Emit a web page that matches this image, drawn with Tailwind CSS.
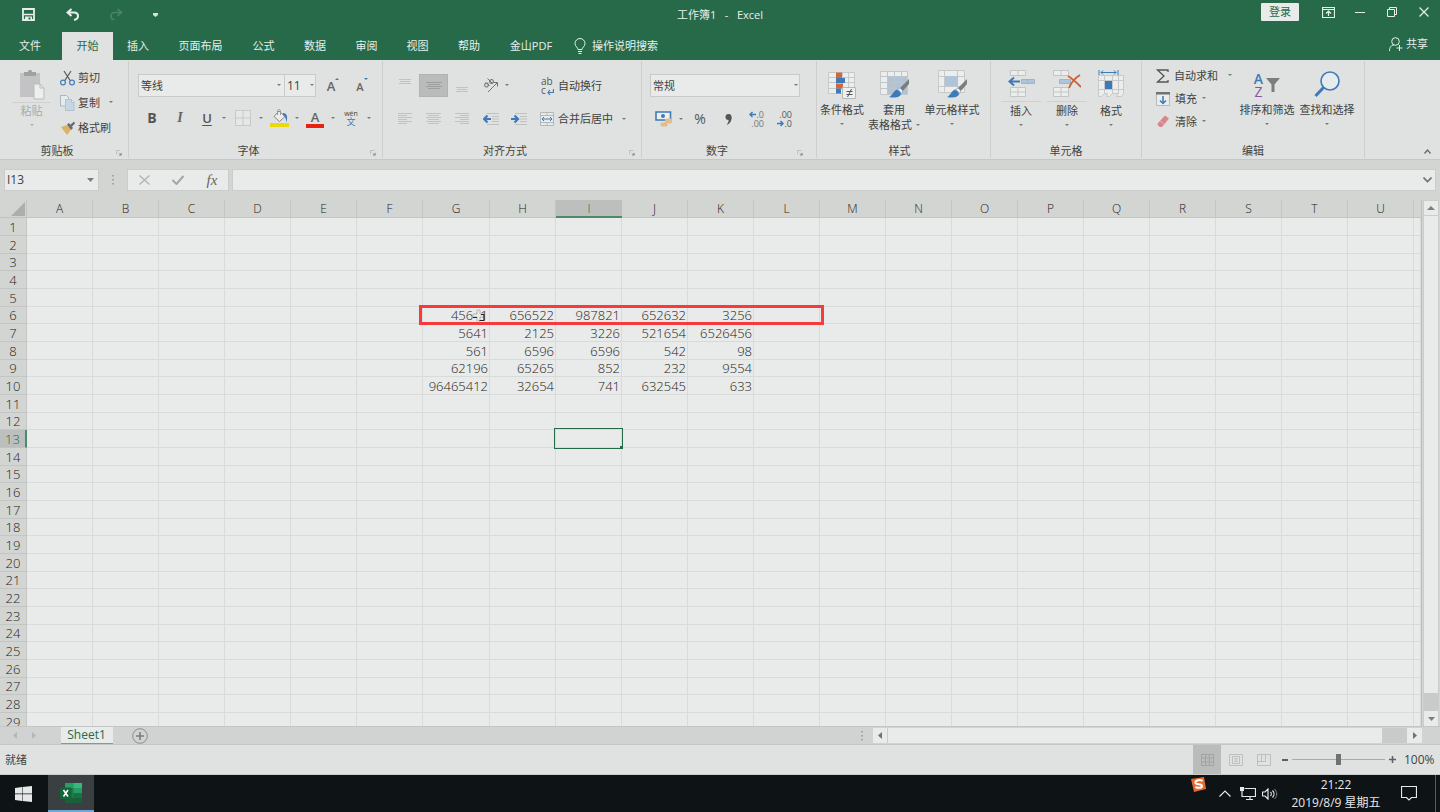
<!DOCTYPE html>
<html lang="zh-CN">
<head>
<meta charset="utf-8">
<title>工作簿1 - Excel</title>
<script src="https://cdn.jsdelivr.net/npm/@tailwindcss/browser@4"></script>
</head>
<body class="flex h-screen flex-col overflow-hidden bg-[#d3d5d3] font-['Open_Sans','Noto_Sans_CJK_SC',sans-serif] text-[11px] leading-4 text-[#3f4241]">
<svg class="hidden" aria-hidden="true">
  <symbol id="caret" viewBox="0 0 4 3"><path d="M0 0h4L2 2z" fill="#777a78"/></symbol>
  <symbol id="launch" viewBox="0 0 7 7"><path d="M.5 5V.5H5M3 3l2.500 2.500" fill="none" stroke="#b4b7b5"/><path d="M6.500 3v3.500H3z" fill="#808381"/></symbol>
  <symbol id="brush" viewBox="0 0 22 21"><path d="M21 1v5l-7 8-3-3z" fill="#7b7e7c"/><path d="M8 12c3-2 6 1 5 4-1 4-8 4-12 3 3-1 4-5 7-7z" fill="#3f7ab8"/><path d="M9 12l3-2 3 3-2 3c0-2-2-4-4-4z" fill="#eef2f2" stroke="#7e9fc0" stroke-width=".6"/></symbol>
</svg>

<header class="bg-[#266a4a] text-[#e8efea]">
  <div class="grid h-8 grid-cols-3">
    <div class="flex items-center pb-[3px] pl-[14px]">
      <button aria-label="保存" class="flex w-7 justify-center"><svg class="h-[13px] w-[13px]" viewBox="0 0 13 13"><path d="M1 1h11v11H1z" fill="none" stroke="#e8efea" stroke-width="1.800"/><path d="M2 6.500h9" stroke="#e8efea" stroke-width="1.500"/><path d="M3 8.500h7v4H3z" fill="#e8efea"/><path d="M6.500 9.500h2v2h-2z" fill="#266a4a"/></svg></button>
      <button aria-label="撤消" class="ml-4 flex w-7 justify-center"><svg class="h-[13px] w-[13px]" viewBox="0 0 13 13"><path d="M5.500 1L1.500 4.500l4 3.500M1.500 4.500H8c2.500 0 4 1.500 4 3.500s-1.500 3.500-4 4" fill="none" stroke="#e8efea" stroke-width="2"/></svg></button>
      <button aria-label="恢复" class="ml-4 flex w-7 justify-center"><svg class="h-[13px] w-[13px]" viewBox="0 0 13 13"><path d="M7.500 1l4 3.500-4 3.500M11.500 4.500H5C2.500 4.500 1 6 1 8s1.500 3.500 3.500 3.500" fill="none" stroke="#4b8568" stroke-width="1.600"/></svg></button>
      <button aria-label="自定义快速访问工具栏" class="ml-[11px] flex w-7 justify-center"><svg class="h-[4px] w-[5px]" viewBox="0 0 5 4"><path d="M0 0h5v2L2.500 4 0 2z" fill="#d5e2da"/></svg></button>
    </div>
    <h1 class="flex items-center justify-center pb-[3px] text-[11px] whitespace-pre">工作簿1   -   Excel</h1>
    <div class="flex items-start justify-end">
      <button class="mt-[3px] mr-[13px] h-[18px] w-[38px] rounded-[1px] bg-[#e8ebe9] text-[#266a4a]">登录</button>
      <button aria-label="功能区显示选项" class="flex h-6 w-8 items-center justify-center"><svg class="h-[11px] w-[13px]" viewBox="0 0 13 11"><path d="M.5.5h12v10H.5zM.5 2.500h12M6.500 9V4.500M4 6.500l2.500-2.500L9 6.500" fill="none" stroke="#e8efea" stroke-width="1.200"/></svg></button>
      <button aria-label="最小化" class="flex h-6 w-8 items-center justify-center"><svg class="h-[10px] w-[10px]" viewBox="0 0 10 10"><path d="M0 5.500h10" stroke="#e8efea"/></svg></button>
      <button aria-label="向下还原" class="flex h-6 w-8 items-center justify-center"><svg class="h-[10px] w-[10px]" viewBox="0 0 10 10"><path d="M.5 2.500h7v7h-7zM2.500 2.500v-2h7v7h-2" fill="none" stroke="#e8efea"/></svg></button>
      <button aria-label="关闭" class="flex h-6 w-8 items-center justify-center"><svg class="h-[10px] w-[10px]" viewBox="0 0 10 10"><path d="M.5.5l9 9M9.500.5l-9 9" stroke="#e8efea" stroke-width="1.200"/></svg></button>
    </div>
  </div>
  <nav class="flex h-7">
    <button class="mr-[6px] w-[51px] pl-[9px]">文件</button>
    <button class="ml-[5px] w-[51px] bg-[#dfe2e0] text-[#266a4a]">开始</button>
    <button class="w-[50px]">插入</button>
    <button class="w-[75px]">页面布局</button>
    <button class="w-[51px]">公式</button>
    <button class="w-[52px]">数据</button>
    <button class="w-[51px]">审阅</button>
    <button class="w-[51px]">视图</button>
    <button class="w-[52px]">帮助</button>
    <button class="w-[72px]">金山PDF</button>
    <button class="flex items-center gap-[6px] pl-[7px]"><svg class="h-4 w-3" viewBox="0 0 12 16"><path d="M4 11.500c0-2-3-3-3-6a5 5 0 0 1 10 0c0 3-3 4-3 6zM4 13.500h4M4.500 15.500h3" fill="none" stroke="#e8efea"/></svg>操作说明搜索</button>
    <button class="mr-3 ml-auto flex items-center gap-[3px] pb-1"><svg class="h-[14px] w-[14px]" viewBox="0 0 14 14"><circle cx="6.500" cy="4.500" r="3.800" fill="none" stroke="#e8efea"/><path d="M.5 14c0-4 2-6 4.500-6M10.500 8v6M7.500 11h6" fill="none" stroke="#e8efea"/></svg>共享</button>
  </nav>
</header>

<section aria-label="功能区" class="flex h-[100px] border-b border-[#c6c8c6] bg-[#dfe2e0] py-[1px]">
  <!-- 剪贴板 -->
  <div class="flex w-[129px] flex-col border-r border-[#cccfcd]">
    <div class="flex flex-1">
      <button class="ml-[12px] flex w-[39px] flex-col items-center pt-[9px] text-[#a9abaa]">
        <svg class="h-[30px] w-[27px]" viewBox="0 0 27 30"><path d="M2 3h20v24H2z" fill="#c3c3c6"/><path d="M6 2h4c0-3 4-3 4 0h4v4H6z" fill="#9fa1a2"/><path d="M16 14h6l4 4v11H16z" fill="#eceeef" stroke="#b9bbbb"/><path d="M22 14v4h4" fill="none" stroke="#b9bbbb"/></svg>
        <span class="mt-[2px] w-full border-t border-[#cfd1cf]">粘贴</span>
        <svg class="mt-[5px] h-[3px] w-1 opacity-50"><use href="#caret"/></svg>
      </button>
      <div class="flex flex-col pt-[4px] pl-[9px]">
        <button class="flex h-[25px] items-center gap-[3px]"><svg class="h-4 w-[15px]" viewBox="0 0 15 16"><path d="M4 1l6.500 10M11 1L4.500 11" stroke="#5d605f" stroke-width="1.300"/><circle cx="3" cy="12.500" r="2.400" fill="none" stroke="#4a7fba" stroke-width="1.200"/><circle cx="12" cy="12.500" r="2.400" fill="none" stroke="#4a7fba" stroke-width="1.200"/></svg>剪切</button>
        <button class="flex h-[25px] items-center gap-[3px]"><svg class="h-4 w-[15px]" viewBox="0 0 15 16"><path d="M.5.5h6l2 2V11h-8z" fill="#e6ebee" stroke="#abb6bf"/><path d="M5.500 4.500h6l2.500 2.500v8.500H5.500z" fill="#c5d7e6" stroke="#b4c0ca"/><path d="M11.500 4.500v3H14" fill="#eef1f2" stroke="#b4c0ca"/></svg>复制<svg class="ml-[6px] h-[3px] w-1"><use href="#caret"/></svg></button>
        <button class="flex h-[25px] items-center gap-[3px]"><svg class="h-[14px] w-[15px]" viewBox="0 0 15 14"><path d="M1 6l6-2 4 5-4 5z" fill="#dcb267"/><path d="M7 3.500l2-1.500 4 5-2 2z" fill="#6a6c6c"/><path d="M10 4l4-3.500 1 2-3.500 3.500z" fill="#6a6c6c"/></svg>格式刷</button>
      </div>
    </div>
    <div class="flex h-[15px]"><span class="flex-1 text-center">剪贴板</span><button aria-label="剪贴板设置" class="flex w-[14px] items-center pt-1"><svg class="ml-[2px] h-[6px] w-[6px]"><use href="#launch"/></svg></button></div>
  </div>

  <!-- 字体 -->
  <div class="flex w-[254px] flex-col border-r border-[#cccfcd]">
    <div class="flex flex-1 flex-col pl-[9px]">
      <div class="mt-[13px] flex h-[23px]">
        <div class="relative"><select aria-label="字体" class="h-full w-[147px] appearance-none border border-[#c9cbc9] bg-[#e8ebe9] pl-[2px]"><option>等线</option></select><svg class="pointer-events-none absolute top-[10px] right-1 h-[3px] w-1"><use href="#caret"/></svg></div>
        <div class="relative"><select aria-label="字号" class="h-full w-[31px] appearance-none border border-l-0 border-[#c9cbc9] bg-[#e8ebe9] pl-[2px] text-[12px]"><option>11</option></select><svg class="pointer-events-none absolute top-[10px] right-[2px] h-[3px] w-1"><use href="#caret"/></svg></div>
        <button aria-label="增大字号" class="flex w-[28px] items-center justify-center pl-[6px]"><span class="text-[13px] font-semibold text-[#666]">A</span><svg class="mb-[14px] h-[2px] w-1" viewBox="0 0 4 2"><path d="M0 2l2-2 2 2z" fill="#3f7ab8"/></svg></button>
        <button aria-label="减小字号" class="flex w-[30px] items-center justify-center pl-[6px]"><span class="mt-[2px] text-[11px] font-semibold text-[#666]">A</span><svg class="mb-[14px] h-[2px] w-1" viewBox="0 0 4 2"><path d="M0 0h4L2 2z" fill="#3f7ab8"/></svg></button>
      </div>
      <div class="mt-[9px] flex h-[24px] items-center">
        <button aria-label="加粗" class="w-7 text-[14px] font-bold text-[#555]">B</button>
        <button aria-label="倾斜" class="w-7 font-['Liberation_Serif',serif] text-[14px] font-bold italic text-[#666]">I</button>
        <button aria-label="下划线" class="w-[26px] text-[13px] font-semibold text-[#555] underline decoration-1 underline-offset-2">U</button>
        <button aria-label="下划线选项" class="w-2"><svg class="mx-auto h-[3px] w-1"><use href="#caret"/></svg></button>
        <button aria-label="边框" class="ml-px w-7"><svg class="mx-auto h-4 w-4" viewBox="0 0 16 16"><path d="M.5.5h15v15H.5zM8 0v16M0 8h16" fill="#e6e8e7" stroke="#c6c9c7"/></svg></button>
        <button aria-label="边框选项" class="w-2"><svg class="mx-auto h-[3px] w-1"><use href="#caret"/></svg></button>
        <button aria-label="填充颜色" class="w-7"><svg class="mx-auto h-[18px] w-[19px]" viewBox="0 0 19 18"><path d="M0 14h19v4H0z" fill="#ecd90c"/><path d="M9 2l6 5.500-5.500 5L4 7.500z" fill="#ececec" stroke="#858886"/><path d="M7.500 6V2c0-2 3-2 3 0v4" fill="none" stroke="#999"/><path d="M13 4c4 0 5 4 3.500 9-1-2 0-5-3.500-7z" fill="#3f7ab8"/></svg></button>
        <button aria-label="填充颜色选项" class="w-2"><svg class="mx-auto h-[3px] w-1"><use href="#caret"/></svg></button>
        <button aria-label="字体颜色" class="flex w-7 flex-col items-center pt-px"><span class="h-[14px] text-[13px] leading-[14px] font-semibold text-[#666]">A</span><span class="h-[4px] w-[18px] bg-[#e8220e]"></span></button>
        <button aria-label="字体颜色选项" class="w-2"><svg class="mx-auto h-[3px] w-1"><use href="#caret"/></svg></button>
        <button aria-label="拼音指南" class="flex w-7 flex-col items-center"><span class="text-[7px] leading-[7px]">wén</span><span class="text-[9px] leading-[9px] text-[#3f7ab8]">文</span></button>
        <button aria-label="拼音选项" class="w-2"><svg class="mx-auto h-[3px] w-1"><use href="#caret"/></svg></button>
      </div>
    </div>
    <div class="flex h-[15px]"><span class="flex-1 text-center">字体</span><button aria-label="字体设置" class="flex w-[14px] items-center pt-1"><svg class="ml-[2px] h-[6px] w-[6px]"><use href="#launch"/></svg></button></div>
  </div>

  <!-- 对齐方式 -->
  <div class="flex w-[259px] flex-col border-r border-[#cccfcd]">
    <div class="flex flex-1 flex-col pl-[8px]">
      <div class="mt-[13px] flex h-[23px] items-center">
        <button aria-label="顶端对齐" class="w-7"><svg class="mx-auto mb-2 h-[6px] w-3" viewBox="0 0 12 6"><path d="M0 .5h12M1 2.500h10M0 4.500h12" stroke="#bfc2c0"/></svg></button>
        <button aria-label="垂直居中" class="h-full w-[29px] border border-[#b0b3b1] bg-[#b9bcba]"><svg class="mx-auto h-[8px] w-4" viewBox="0 0 16 8"><path d="M0 .5h16M2 2.500h12M0 4.500h16M2 6.500h12" stroke="#9da09e"/></svg></button>
        <button aria-label="底端对齐" class="w-7"><svg class="mx-auto mt-2 h-[6px] w-3" viewBox="0 0 12 6"><path d="M0 .5h12M1 2.500h10M0 4.500h12" stroke="#bfc2c0"/></svg></button>
        <button aria-label="方向" class="ml-px w-7"><svg class="mx-auto h-[15px] w-4" viewBox="0 0 16 15"><g fill="none" stroke="#6f7270"><ellipse cx="3.500" cy="7" rx="2" ry="1.800" transform="rotate(-45 3.500 7)"/><path d="M3 4.500l3.500 3.500M4.500.5l5 5"/><ellipse cx="8.500" cy="3.500" rx="2" ry="1.800" transform="rotate(-45 8.500 3.500)"/><path d="M5 14l9-9M10.500 4.500h4v4"/></g></svg></button>
        <button aria-label="方向选项" class="w-2"><svg class="h-[3px] w-1"><use href="#caret"/></svg></button>
        <button class="ml-[28px] flex items-center gap-[4px]"><span class="relative w-[13px] text-left text-[10px] leading-[10px] text-[#555]"><span class="block h-[9px] leading-[9px]">ab</span><span class="block h-[9px] leading-[9px]">c</span><svg class="absolute right-0 bottom-0 h-[6px] w-[7px]" viewBox="0 0 7 6"><path d="M6.500 0v3.500H1M3 1L1 3.500 3 6" fill="none" stroke="#3f7ab8" stroke-width="1.200"/></svg></span>自动换行</button>
      </div>
      <div class="mt-[10px] flex h-[24px] items-center">
        <button aria-label="左对齐" class="w-7"><svg class="mx-auto h-[12px] w-[14px]" viewBox="0 0 14 12"><path d="M0 .5h14M0 2.500h9M0 4.500h14M0 6.500h9M0 8.500h14M0 10.500h9" stroke="#bfc2c0"/></svg></button>
        <button aria-label="居中" class="w-[29px]"><svg class="mx-auto h-[12px] w-[15px]" viewBox="0 0 15 12"><path d="M0 .5h15M2 2.500h11M0 4.500h15M2 6.500h11M0 8.500h15M2 10.500h11" stroke="#bfc2c0"/></svg></button>
        <button aria-label="右对齐" class="w-7"><svg class="mx-auto h-[12px] w-[14px]" viewBox="0 0 14 12"><path d="M0 .5h14M5 2.500h9M0 4.500h14M5 6.500h9M0 8.500h14M5 10.500h9" stroke="#bfc2c0"/></svg></button>
        <button aria-label="减少缩进量" class="ml-px w-7"><svg class="mx-auto h-[12px] w-4" viewBox="0 0 16 12"><path d="M4 .5h12M9 3.500h7M9 6h7M9 8.500h7M4 11.500h12" stroke="#bfc2c0"/><path d="M8 6H1.500M4.500 2.500L1 6l3.500 3.500" fill="none" stroke="#3f7ab8" stroke-width="2.200"/></svg></button>
        <button aria-label="增加缩进量" class="w-7"><svg class="mx-auto h-[12px] w-4" viewBox="0 0 16 12"><path d="M4 .5h12M9 3.500h7M9 6h7M9 8.500h7M4 11.500h12" stroke="#bfc2c0"/><path d="M0 6h6.500M3.500 2.500L7 6 3.500 9.500" fill="none" stroke="#3f7ab8" stroke-width="2.200"/></svg></button>
        <button class="ml-[7px] flex items-center gap-[4px]"><svg class="h-[14px] w-[14px]" viewBox="0 0 14 14"><path d="M.5.5h13v13H.5zM.5 3.500h13M.5 10.500h13M7 0v3.500M7 10.500V14" fill="#e8ebe9" stroke="#b5b8b6"/><path d="M2 7h10M4 5L2 7l2 2M10 5l2 2-2 2" fill="none" stroke="#3f7ab8"/></svg>合并后居中<svg class="ml-[5px] h-[3px] w-1"><use href="#caret"/></svg></button>
      </div>
    </div>
    <div class="flex h-[15px]"><span class="flex-1 text-center">对齐方式</span><button aria-label="对齐设置" class="flex w-[14px] items-center pt-1"><svg class="ml-[2px] h-[6px] w-[6px]"><use href="#launch"/></svg></button></div>
  </div>

  <!-- 数字 -->
  <div class="flex w-[175px] flex-col border-r border-[#cccfcd]">
    <div class="flex flex-1 flex-col pl-[8px]">
      <div class="relative mt-[13px] h-[23px] w-[150px]"><select aria-label="数字格式" class="h-full w-full appearance-none border border-[#c9cbc9] bg-[#e8ebe9] pl-[2px]"><option>常规</option></select><svg class="pointer-events-none absolute top-[10px] right-[2px] h-[3px] w-1"><use href="#caret"/></svg></div>
      <div class="mt-[10px] flex h-[24px] items-center">
        <button aria-label="会计数字格式" class="w-[26px]"><svg class="mx-auto h-4 w-[17px]" viewBox="0 0 17 16"><path d="M1 1h14.500v8H1z" fill="#edf0f1" stroke="#3f7ab8" stroke-width="1.600"/><circle cx="8" cy="5" r="2" fill="#3f7ab8"/><g fill="#e2bd8a"><rect x="10" y="7.500" width="7" height="5" rx="1.500"/><rect x="5.500" y="11.500" width="7" height="4" rx="1.500"/></g></svg></button>
        <button aria-label="会计格式选项" class="w-[10px]"><svg class="mx-auto h-[3px] w-1"><use href="#caret"/></svg></button>
        <button aria-label="百分比样式" class="w-7 text-[14px] text-[#555]">%</button>
        <button aria-label="千位分隔样式" class="w-7"><svg class="mx-auto h-[11px] w-[7px]" viewBox="0 0 7 11"><circle cx="3.500" cy="3" r="3" fill="#555"/><path d="M6.500 3c.5 4-2 7-5 8 1.500-2 2.500-4 2-6z" fill="#555"/></svg></button>
        <button aria-label="增加小数位数" class="flex w-7 flex-col items-end pr-[6px] text-[9px] leading-[9px] text-[#777]"><span class="flex items-center"><svg class="h-[7px] w-[7px]" viewBox="0 0 7 7"><path d="M7 3.500H1M3.500 1L1 3.500 3.500 6" fill="none" stroke="#3f7ab8" stroke-width="1.500"/></svg>.0</span><span>.00</span></button>
        <button aria-label="减少小数位数" class="flex w-7 flex-col items-end pr-[6px] text-[9px] leading-[9px] text-[#555]"><span>.00</span><span class="flex items-center"><svg class="h-[7px] w-[7px]" viewBox="0 0 7 7"><path d="M0 3.500h6M3.500 1L6 3.500 3.500 6" fill="none" stroke="#3f7ab8" stroke-width="1.500"/></svg>.0</span></button>
      </div>
    </div>
    <div class="flex h-[15px] pr-[10px]"><span class="flex-1 text-center">数字</span><button aria-label="数字格式设置" class="flex w-[14px] items-center pt-1"><svg class="ml-[5px] h-[6px] w-[6px]"><use href="#launch"/></svg></button></div>
  </div>

  <!-- 样式 -->
  <div class="flex w-[174px] flex-col border-r border-[#cccfcd]">
    <div class="flex flex-1">
      <button class="flex w-[50px] flex-col items-center pt-[9px]">
        <svg class="h-[30px] w-[30px]" viewBox="0 0 30 30"><path d="M1.500 2.500h26v21h-26zM1.500 7.500h26M1.500 12.500h26M1.500 18.500h26M9.500 2.500v21M15.500 2.500v21M21.500 2.500v21" fill="#eceeed" stroke="#c6c9c7"/><path d="M9 2.500h6V8H9zM9 13.500h7v5H9z" fill="#cf6840"/><path d="M9 8h9v5H9zM9 18.500h5v5H9z" fill="#3f7ab8"/><path d="M15.500 17.500h13v11h-13z" fill="#eef0ef" stroke="#b5b8b6"/><path d="M19.500 21.500h6M19.500 24.500h6M24.500 19l-4 8" stroke="#555"/></svg>
        <span class="mt-[2px]">条件格式</span><svg class="mt-[5px] h-[3px] w-1"><use href="#caret"/></svg>
      </button>
      <button class="flex w-[54px] flex-col items-center pt-[9px]">
        <svg class="h-[30px] w-[30px]" viewBox="0 0 30 30"><path d="M1.500 1.500h27v23h-27z" fill="#eceeed" stroke="#c6c9c7"/><path d="M8 7h20v17H8z" fill="#afc4d8"/><path d="M1.500 6.500h27M1.500 12.500h27M1.500 18.500h27M8.500 1.500v23M15.500 1.500v23M22.500 1.500v23" stroke="#bfc6cb" fill="none"/><svg x="9" y="8" width="22" height="21"><use href="#brush"/></svg></svg>
        <span class="mt-[2px]">套用</span><span class="-mt-px flex items-center gap-1 whitespace-nowrap">表格格式<svg class="h-[3px] w-1"><use href="#caret"/></svg></span>
      </button>
      <button class="flex w-[62px] flex-col items-center pt-[9px]">
        <svg class="h-[30px] w-[30px]" viewBox="0 0 30 30"><path d="M1.500.5h26v22h-26zM1.500 6.500h26M1.500 16.500h26M7.500.5v22M20.500.5v22" fill="#eceeed" stroke="#c6c9c7"/><path d="M8 6h13v10H8z" fill="#afc4d8"/><svg x="9" y="8" width="22" height="21"><use href="#brush"/></svg></svg>
        <span class="mt-[2px]">单元格样式</span><svg class="mt-[5px] h-[3px] w-1"><use href="#caret"/></svg>
      </button>
    </div>
    <div class="h-[15px] pr-2 text-center">样式</div>
  </div>

  <!-- 单元格 -->
  <div class="flex w-[151px] flex-col border-r border-[#cccfcd]">
    <div class="flex flex-1 gap-[6px] pl-[10px]">
      <button class="flex w-10 flex-col items-center pt-[9px]">
        <svg class="h-[28px] w-[27px]" viewBox="0 0 27 28"><path d="M2.500.5h15v5h-15zM10 .5v5M2.500 17.500h15v9h-15zM10 17.500v9M2.500 22h15" fill="#eceeed" stroke="#c2c5c3"/><path d="M13.500 9.500h13v4h-13z" fill="#afc4d8" stroke="#9fb5c9"/><path d="M20 9.500v4" stroke="#9fb5c9"/><path d="M12 11.500H2M6 7.500l-4.500 4L6 15.500" fill="none" stroke="#3f7ab8" stroke-width="2"/></svg>
        <span class="mt-[3px] w-full border-t border-[#cfd1cf] pt-px">插入</span><svg class="mt-[5px] h-[3px] w-1"><use href="#caret"/></svg>
      </button>
      <button class="flex w-10 flex-col items-center pt-[9px]">
        <svg class="h-[28px] w-[28px]" viewBox="0 0 28 28"><path d="M.5.5h15v5H.5zM8 .5v5M.5 17.500h15v9H.5zM8 17.500v9M.5 22h15" fill="#eceeed" stroke="#c2c5c3"/><path d="M6.500 9.500h11v4h-11z" fill="#afc4d8" stroke="#9fb5c9"/><path d="M15 6c5 3 9 7 13 11M27 5c-5 3-9 8-11 13" fill="none" stroke="#cf5f35" stroke-width="1.800"/></svg>
        <span class="mt-[3px] w-full border-t border-[#cfd1cf] pt-px">删除</span><svg class="mt-[5px] h-[3px] w-1"><use href="#caret"/></svg>
      </button>
      <button class="flex w-9 flex-col items-center pt-[9px]">
        <svg class="h-[28px] w-[26px]" viewBox="0 0 26 28"><path d="M.5 5.500h25v18l-2 3h-5l2-3h-6l-3 3h-3l1-3h-3l-3 3h-3zM.5 10.500h25M.5 19.500h25M6.500 5.500v18M14.500 5.500v18M20.500 5.500v18" fill="#eceeed" stroke="#c6c9c7"/><path d="M7 11h7v8H7z" fill="#3f7ab8"/><path d="M1 0v5M20 0v5M3 2.500h15M5 .5l-2 2 2 2M16 .5l2 2-2 2" fill="none" stroke="#3f7ab8"/></svg>
        <span class="mt-[3px] w-full pt-[2px]">格式</span><svg class="mt-[5px] h-[3px] w-1"><use href="#caret"/></svg>
      </button>
    </div>
    <div class="h-[15px] text-center">单元格</div>
  </div>

  <!-- 编辑 -->
  <div class="flex w-[223px] flex-col border-r border-[#cccfcd]">
    <div class="flex flex-1">
      <div class="flex w-[95px] flex-col pt-[3px] pl-[14px]">
        <button class="flex h-[23px] items-center gap-[5px] whitespace-nowrap"><svg class="h-[14px] w-[13px]" viewBox="0 0 13 14"><path d="M12 3V1H1.500L8 7l-6.500 6H12v-2" fill="none" stroke="#555" stroke-width="1.300"/></svg>自动求和<svg class="ml-[5px] h-[3px] w-1"><use href="#caret"/></svg></button>
        <button class="flex h-[23px] items-center gap-[5px]"><svg class="h-[14px] w-[14px]" viewBox="0 0 14 14"><path d="M.5.5h13v13H.5z" fill="#eceeed" stroke="#b5b8b6"/><path d="M0 0h14v2.500H0z" fill="#707371"/><path d="M7 4v7M4 8.500l3 3 3-3" fill="none" stroke="#3f7ab8" stroke-width="1.500"/></svg>填充<svg class="h-[3px] w-1"><use href="#caret"/></svg></button>
        <button class="flex h-[23px] items-center gap-[5px]"><svg class="h-[13px] w-[14px]" viewBox="0 0 14 13"><path d="M2 8l7-7.500 4 3L6 12H4L1.500 10z" fill="#d9858c"/><path d="M4 5.800l4.500 3.500" stroke="#eab5b9"/></svg>清除<svg class="h-[3px] w-1"><use href="#caret"/></svg></button>
      </div>
      <button class="flex w-[60px] flex-col items-center pt-[9px]">
        <span class="flex h-[30px] items-center gap-[3px]"><span class="text-[14px] leading-[13px] font-semibold"><span class="block text-[#3f7ab8]">A</span><span class="block font-normal text-[#8a55a8]">Z</span></span><svg class="h-[14px] w-[14px]" viewBox="0 0 14 14"><path d="M0 0h14L8.500 6.500V14h-3V6.500z" fill="#7b7e7c"/></svg></span>
        <span class="mt-[2px] whitespace-nowrap">排序和筛选</span><svg class="mt-[5px] h-[3px] w-1"><use href="#caret"/></svg>
      </button>
      <button class="flex w-[60px] flex-col items-center pt-[9px]">
        <svg class="h-[30px] w-[26px]" viewBox="0 0 26 30"><circle cx="16" cy="11" r="9" fill="#e6ebee" stroke="#3f7ab8" stroke-width="1.600"/><path d="M9.500 17.500L1.500 26" stroke="#3f7ab8" stroke-width="3"/></svg>
        <span class="mt-[2px] whitespace-nowrap">查找和选择</span><svg class="mt-[5px] h-[3px] w-1"><use href="#caret"/></svg>
      </button>
    </div>
    <div class="h-[15px] text-center">编辑</div>
  </div>
  <button aria-label="折叠功能区" class="mt-auto mr-[9px] mb-1 ml-auto"><svg class="h-[5px] w-[7px]" viewBox="0 0 7 5"><path d="M.5 4.500l3-3.500 3 3.500" fill="none" stroke="#666" stroke-width="1.200"/></svg></button>
</section>

<!-- 编辑栏 -->
<section aria-label="编辑栏" class="flex h-[39px] shrink-0 items-center pr-1 pl-1">
  <div class="relative"><input aria-label="名称框" value="I13" class="h-[22px] w-[95px] border border-[#cacdcb] bg-[#e8ebe9] pl-[2px] text-[12px]"><svg class="absolute top-[9px] right-[5px] h-1 w-[7px]" viewBox="0 0 7 4"><path d="M0 0h7L3.500 4z" fill="#7b7e7c"/></svg></div>
  <svg class="mx-[12px] h-[10px] w-[4px]" viewBox="0 0 4 10"><path d="M1 0h2v1.500H1zM1 4h2v1.500H1zM1 8h2v1.500H1z" fill="#a3a6a4"/></svg>
  <div class="flex h-[22px] w-[102px] items-center border border-[#cacdcb] bg-[#e8ebe9]">
    <button aria-label="取消" class="w-[33px]"><svg class="mx-auto h-[10px] w-[11px]" viewBox="0 0 11 10"><path d="M.5.5l10 9M10.500.5l-10 9" stroke="#b0b3b1" stroke-width="1.300"/></svg></button>
    <button aria-label="输入" class="w-[33px]"><svg class="mx-auto h-[10px] w-3" viewBox="0 0 12 10"><path d="M.5 5l4 4 7-8" fill="none" stroke="#a3a6a4" stroke-width="2"/></svg></button>
    <button aria-label="插入函数" class="w-[34px] pl-[2px] font-['Liberation_Serif',serif] text-[15px] italic text-[#666]">fx</button>
  </div>
  <div class="relative ml-[3px] flex-1"><input aria-label="编辑栏" class="block h-[22px] w-full border border-[#cacdcb] bg-[#e8ebe9] px-1"><svg class="absolute top-[8px] right-[4px] h-[6px] w-[9px]" viewBox="0 0 9 6"><path d="M.5.5l4 4 4-4" fill="none" stroke="#6f7270" stroke-width="1.600"/></svg></div>
</section>

<!-- 工作表 -->
<main class="flex min-h-0 flex-1 pt-px">
  <div class="relative min-w-0 flex-1 overflow-hidden border-r border-[#bcbfbd] bg-[#e8ebe9]">
    <table class="w-full table-fixed border-separate border-spacing-0 font-['Open_Sans',sans-serif] text-[13px] leading-4 font-light text-[#1f2221]">
      <thead><tr id="cols" class="h-[18px]"></tr></thead>
      <tbody id="rows"></tbody>
    </table>
    <div class="pointer-events-none absolute top-[105px] left-[419px] h-[20px] w-[405px] border-3 border-[#f73a3c]"></div>
    <svg class="pointer-events-none absolute top-[109px] left-[472px] h-[13px] w-[13px]" viewBox="0 0 13 13"><path d="M5 1h3v4h4v3H8v4H5V8H1V5h4z" fill="#e8ebe9" stroke="#b5b8b6"/><path d="M9 5.500h3v6H7.500M5 8.500H1" fill="none" stroke="#222" stroke-width="1.200"/></svg>
  </div>
  <div class="mx-[1px] flex w-4 shrink-0 flex-col border-x border-[#cacdcb] bg-[#c8cbc9]">
    <button aria-label="向上滚动" class="flex h-4 items-center justify-center border-y border-[#cacdcb] bg-[#e8ebe9]"><svg class="h-1 w-[8px]" viewBox="0 0 8 4"><path d="M0 4h8L4 0z" fill="#7b7e7c"/></svg></button>
    <div class="mb-[18px] flex-1 bg-[#e8ebe9]"></div>
    <button aria-label="向下滚动" class="flex h-[15px] items-center justify-center bg-[#e8ebe9]"><svg class="h-1 w-[7px]" viewBox="0 0 7 4"><path d="M0 0h7L3.500 4z" fill="#7b7e7c"/></svg></button>
  </div>
</main>

<!-- 工作表标签 -->
<section aria-label="工作表标签" class="flex h-[19px] shrink-0 items-start border-y border-[#c3c6c4] bg-[#d0d3d1]">
  <button aria-label="上一张" class="ml-[13px] flex h-full w-[6px] items-center"><svg class="h-[7px] w-1" viewBox="0 0 4 7"><path d="M4 0v7L0 3.500z" fill="#b5b8b6"/></svg></button>
  <button aria-label="下一张" class="ml-[13px] flex h-full w-[6px] items-center"><svg class="h-[7px] w-1" viewBox="0 0 4 7"><path d="M0 0v7l4-3.500z" fill="#b5b8b6"/></svg></button>
  <button class="ml-[23px] h-[17px] w-[52px] border-b border-[#6fa68c] bg-[#e8ebe9] pr-px text-[12px] leading-[14px] text-[#266a4a]">Sheet1</button>
  <button aria-label="新工作表" class="ml-[19px] flex h-full items-center"><svg class="h-4 w-4" viewBox="0 0 16 16"><circle cx="8" cy="8" r="7.300" fill="none" stroke="#8b8e8c"/><path d="M8 4v8M4 8h8" stroke="#7b7e7c" stroke-width="1.600"/></svg></button>
  <svg class="mt-1 ml-auto h-[10px] w-[4px]" viewBox="0 0 4 10"><path d="M1 0h2v1.500H1zM1 4h2v1.500H1zM1 8h2v1.500H1z" fill="#a3a6a4"/></svg>
  <div class="mr-[18px] ml-[9px] flex h-[17px] w-[549px] py-px">
    <button aria-label="向左滚动" class="flex w-[15px] items-center justify-center border-r border-[#cacdcb] bg-[#e8ebe9]"><svg class="h-[7px] w-1" viewBox="0 0 4 7"><path d="M4 0v7L0 3.500z" fill="#6f7270"/></svg></button>
    <div class="w-[494px] bg-[#e8ebe9]"></div>
    <div class="flex-1 bg-[#c8cbc9]"></div>
    <button aria-label="向右滚动" class="flex w-[15px] items-center justify-center bg-[#e8ebe9]"><svg class="h-[7px] w-1" viewBox="0 0 4 7"><path d="M0 0v7l4-3.500z" fill="#6f7270"/></svg></button>
  </div>
</section>

<!-- 状态栏 -->
<footer class="flex h-[30px] shrink-0 items-center border-b border-[#c9ccca] bg-[#dfe2e0] pl-[5px]">
  <span>就绪</span>
  <button aria-label="普通视图" class="ml-auto flex h-full w-[28px] items-center justify-center bg-[#b9bcba]"><svg class="h-3 w-[13px]" viewBox="0 0 13 12"><path d="M.5.5h12v11H.5zM.5 4h12M.5 8h12M4.500.5v11M8.500.5v11" fill="none" stroke="#a0a3a1"/></svg></button>
  <button aria-label="页面布局视图" class="flex w-[29px] items-center justify-center"><svg class="h-3 w-[14px]" viewBox="0 0 14 12"><path d="M.5.5h13v11H.5zM3.500 2.500h7v7h-7zM5.500 4.500h3M5.500 6h3M5.500 7.500h3" fill="none" stroke="#bcbfbd"/></svg></button>
  <button aria-label="分页预览" class="flex w-[28px] items-center justify-center"><svg class="h-3 w-[14px]" viewBox="0 0 14 12"><path d="M.5.5h13v11H.5zM.5 7.500h8v-7M4.500.5v7" fill="none" stroke="#bcbfbd"/></svg></button>
  <button aria-label="缩小" class="flex w-[14px] justify-center"><svg class="h-[6px] w-[6px]" viewBox="0 0 6 6"><path d="M0 3h6" stroke="#5d605e" stroke-width="2"/></svg></button>
  <input type="range" aria-label="显示比例" min="0" max="100" value="50" class="h-3 w-[93px] appearance-none bg-[linear-gradient(#a8aba9,#a8aba9)] bg-[length:100%_1px] bg-center bg-no-repeat [&::-webkit-slider-thumb]:h-[11px] [&::-webkit-slider-thumb]:w-[5px] [&::-webkit-slider-thumb]:appearance-none [&::-webkit-slider-thumb]:bg-[#6f7270]">
  <button aria-label="放大" class="flex w-[14px] justify-center"><svg class="h-[7px] w-[7px]" viewBox="0 0 7 7"><path d="M0 3.500h7M3.500 0v7" stroke="#5d605e" stroke-width="1.500"/></svg></button>
  <span class="mr-[6px] ml-[5px] w-[30px] text-[12px]">100%</span>
</footer>

<!-- 任务栏 -->
<div class="flex h-[37px] shrink-0 items-center bg-[#0e1315] text-[#e6e8e7]">
  <button aria-label="开始菜单" class="flex w-12 justify-center pr-[2px]"><svg class="h-4 w-[17px]" viewBox="0 0 17 16"><path d="M0 2l7-1v6.500H0zM7.500 1l9.500-1v7.500H7.500zM0 8.200h7V15l-7-1zM7.500 8.200H17V16l-9.500-1z" fill="#e6e8e7"/></svg></button>
  <button aria-label="Excel" class="flex h-full w-[46px] items-center justify-center border-b-2 border-[#6fa8d6] bg-[#3a3f41]"><svg class="h-5 w-[22px]" viewBox="0 0 22 20"><path d="M5 0h17v20H5z" fill="#1f7d4c"/><path d="M5 0h8.500v5H5z" fill="#27a068"/><path d="M13.500 0H22v5h-8.500z" fill="#38b87d"/><path d="M13.500 5H22v5h-8.500z" fill="#279c66"/><path d="M13.500 10H22v5h-8.500z" fill="#187344"/><path d="M5 15h17v5H5z" fill="#17603a"/><rect y="4.500" width="11.500" height="11.500" rx="1" fill="#13653a"/><path d="M3.500 7l4.500 6.500M8 7l-4.500 6.500" stroke="#fff" stroke-width="1.600"/></svg></button>
  <svg class="mb-[18px] ml-auto h-[15px] w-[15px]" viewBox="0 0 15 15" role="img" aria-label="搜狗输入法"><path d="M0 2l13-2 2 12-12 3z" fill="#e8692c"/><path d="M11.500 4C9 2 4 3.500 4.500 6c.5 2 6.500.5 6.500 3 0 2-4 2.500-6.500.8" fill="none" stroke="#fff" stroke-width="2"/></svg>
  <button aria-label="显示隐藏的图标" class="ml-[13px]"><svg class="h-[7px] w-3" viewBox="0 0 12 7"><path d="M.5 6.500L6 1l5.500 5.500" fill="none" stroke="#e6e8e7" stroke-width="1.200"/></svg></button>
  <button aria-label="网络" class="ml-[9px]"><svg class="h-[13px] w-4" viewBox="0 0 16 13"><path d="M4.500 1.500h11v8h-11M2 3.500v6h4M10 9.500v3M6 12.500h7" fill="none" stroke="#e6e8e7" stroke-width="1.200"/><path d="M0 0h4v4H0z" fill="#e6e8e7"/></svg></button>
  <button aria-label="音量" class="ml-[6px]"><svg class="h-3 w-[16px]" viewBox="0 0 16 12"><path d="M.5 4h2.500l3-3v10L3 8H.5zM8.500 4c1 1 1 3 0 4M10.500 2.500c2 2 2 5 0 7" fill="none" stroke="#e6e8e7" stroke-width="1.200"/><path d="M12.500 1c3 3 3 7 0 10" fill="none" stroke="#858889"/></svg></button>
  <button class="ml-[13px] w-[90px] text-center text-[12px] leading-[18px] whitespace-nowrap"><time datetime="2019-08-09T21:22"><span class="block">21:22</span><span class="block">2019/8/9 星期五</span></time></button>
  <button aria-label="通知" class="ml-[20px]"><svg class="h-[15px] w-4" viewBox="0 0 16 15"><path d="M.5.5h15v11h-5L8 14l-2.500-2.500h-5z" fill="none" stroke="#e6e8e7" stroke-width="1.200"/></svg></button>
  <button aria-label="显示桌面" class="ml-[18px] h-full w-[5px] border-l border-[#595d5f]"></button>
</div>

<script>
const letters = 'ABCDEFGHIJKLMNOPQRSTU';
const data = {
  6: [45641, 656522, 987821, 652632, 3256],
  7: [5641, 2125, 3226, 521654, 6526456],
  8: [561, 6596, 6596, 542, 98],
  9: [62196, 65265, 852, 232, 9554],
  10: [96465412, 32654, 741, 632545, 633],
};
let head = '<th class="w-[27px] border-r border-b border-[#c0c3c1] bg-[#d3d5d3] p-0"><svg class="ml-auto mr-px h-[14px] w-[14px]" viewBox="0 0 14 14"><path d="M14 0v14H0z" fill="#abaeac"/></svg></th>';
for (const c of letters) {
  if (c === 'I') {
    head += '<th scope="col" class="w-[66px] border-b-2 border-[#4d8a6c] bg-[#bcbfbd] p-0 pt-px text-[12px] leading-[15px] font-light text-[#266a4a]">I</th>';
  } else if (c === 'G') {
    head += '<th scope="col" class="w-[67px] border-r border-b border-[#c3c6c4] bg-[#d3d5d3] p-0 pt-px text-[12px] font-light">G</th>';
  } else {
    head += '<th scope="col" class="w-[66px] border-r border-b border-[#c3c6c4] bg-[#d3d5d3] p-0 pt-px text-[12px] font-light">' + c + '</th>';
  }
}
document.getElementById('cols').innerHTML = head + '<th class="border-b border-[#c3c6c4] bg-[#d3d5d3] p-0"></th>';
let body = '';
for (let r = 1; r <= 29; r++) {
  body += r % 3 === 0 ? '<tr class="h-[17px]">' : '<tr class="h-[18px]">';
  body += r === 13
    ? '<th scope="row" class="border-r-2 border-b border-r-[#4d8a6c] border-b-[#c0c3c1] bg-[#bcbfbd] p-0 font-light text-[#266a4a]">13</th>'
    : '<th scope="row" class="border-r border-b border-[#c3c6c4] bg-[#d3d5d3] p-0 font-light">' + r + '</th>';
  for (let c = 0; c < 22; c++) {
    const v = data[r] && c >= 6 && c <= 10 ? data[r][c - 6] : '';
    body += r === 13 && c === 8
      ? '<td class="relative border-r border-b border-[#d8dbd9] p-0"><span class="absolute -inset-[2px] border border-[#266a4a]"></span><span class="absolute -right-[2px] -bottom-[2px] h-[3px] w-[3px] bg-[#266a4a]"></span></td>'
      : '<td class="border-r border-b border-[#d8dbd9] p-0 pr-[1px] text-right">' + v + '</td>';
  }
  body += '</tr>';
}
document.getElementById('rows').innerHTML = body;
</script>
</body>
</html>
